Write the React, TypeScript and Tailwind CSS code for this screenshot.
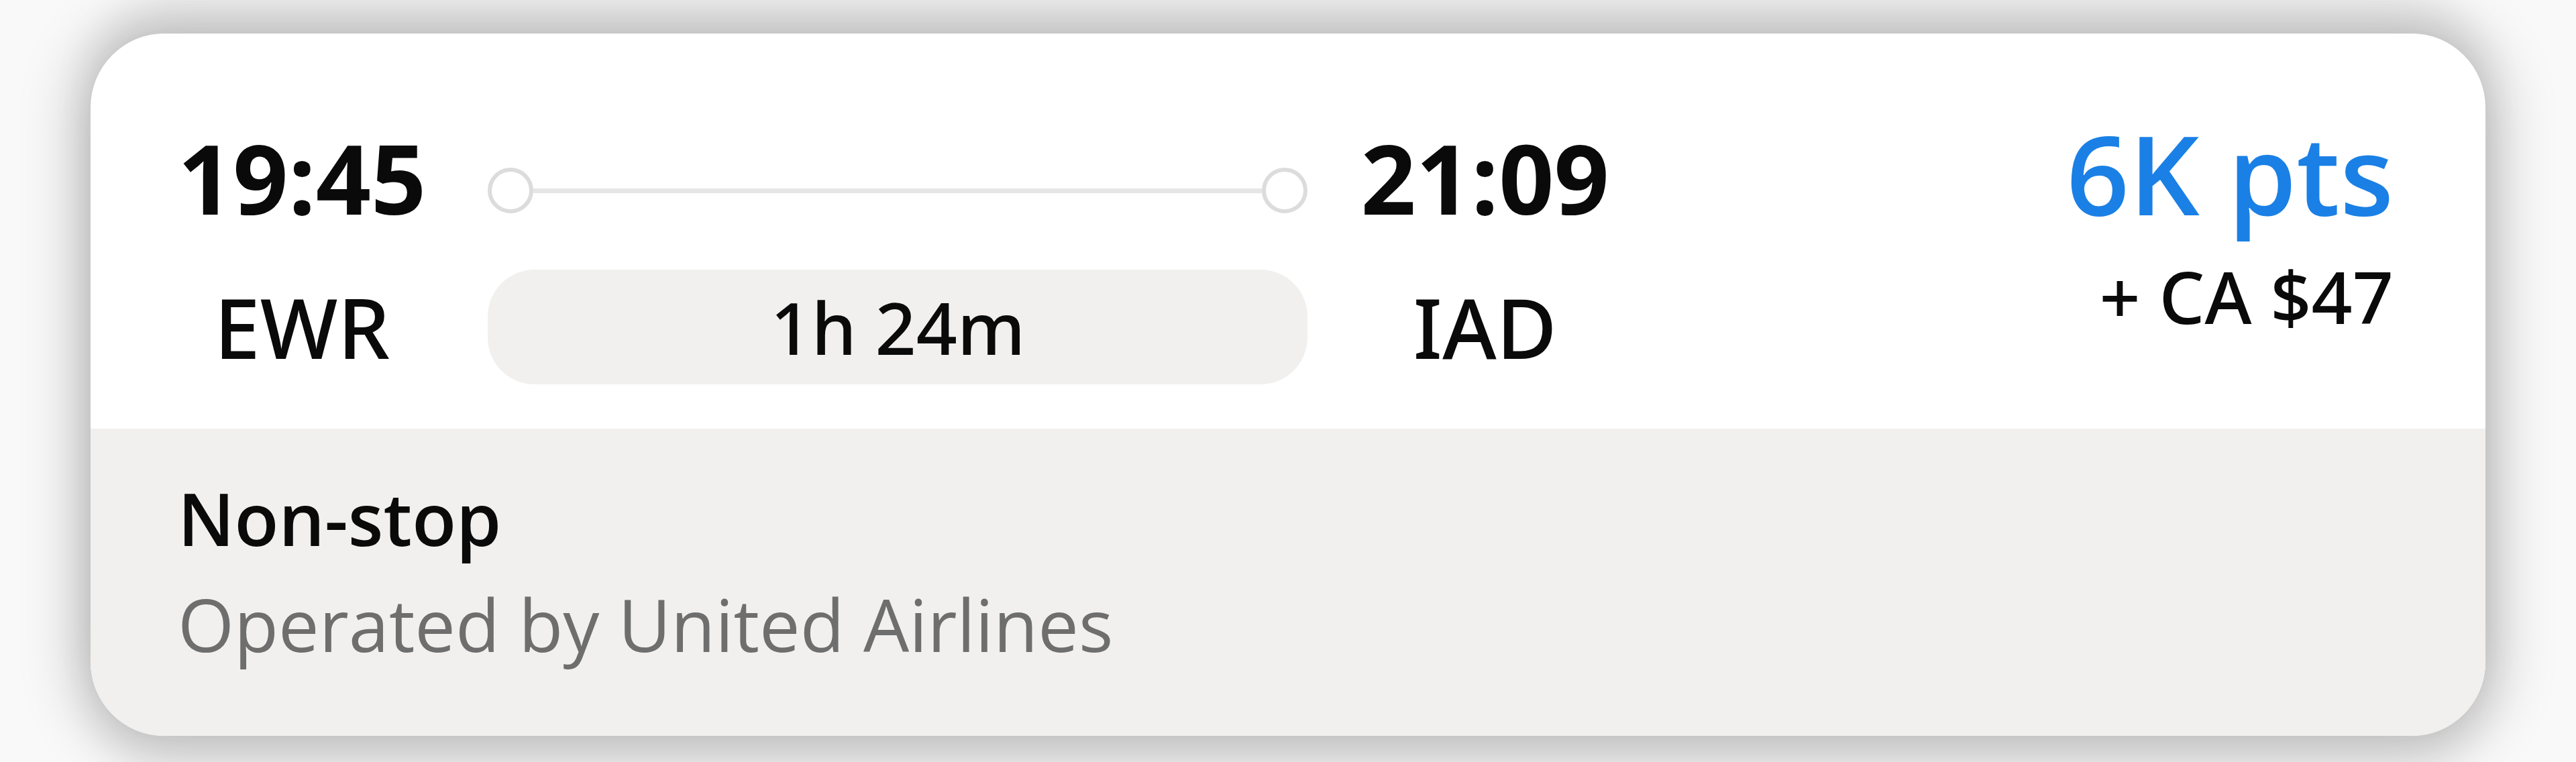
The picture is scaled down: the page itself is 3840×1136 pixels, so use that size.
import React from "react";

const FONT = { fontFamily: '"Open Sans", "Noto Sans", sans-serif' };
// Open Sans has no medium weight installed, Noto Sans does
const MEDIUM = { fontFamily: '"Noto Sans", "Open Sans", sans-serif' };

function TimeColumn({ time, code }: { time: string; code: string }) {
  return (
    <div className="flex flex-col items-center mt-[16px]">
      <span className="text-[144px] leading-[144px] font-bold text-[#0a0a0a]">{time}</span>
      <span className="mt-[90px] text-[123px] leading-[123px] font-medium text-[#0a0a0a]" style={MEDIUM}>
        {code}
      </span>
    </div>
  );
}

function Route({ duration }: { duration: string }) {
  return (
    <div className="w-[1222px] mt-[74px] flex flex-col">
      <div className="flex items-center h-[68px]">
        <div className="w-[68px] h-[68px] rounded-full border-[6px] border-[#dcdcdc] bg-white shrink-0" />
        <div className="flex-1 h-[7px] bg-[#e6e6e6]" />
        <div className="w-[68px] h-[68px] rounded-full border-[6px] border-[#dcdcdc] bg-white shrink-0" />
      </div>
      <div className="mt-[84px] h-[171px] rounded-[70px] bg-[#f1f0ee] flex items-center justify-center">
        <span className="text-[107px] leading-[107px] font-medium text-[#0a0a0a]" style={MEDIUM}>
          {duration}
        </span>
      </div>
    </div>
  );
}

export default function App() {
  return (
    <div className="w-[3840px] h-[1136px] overflow-hidden bg-[#f9f9f9] pt-[50px] pl-[135px]" style={FONT}>
      <div className="w-[3570px] h-[1047px] rounded-[110px] overflow-hidden bg-white flex flex-col shadow-[0_0_90px_20px_rgba(0,0,0,0.2),0_-40px_60px_rgba(0,0,0,0.08),0_40px_60px_rgba(0,0,0,0.08)]">
        {/* Times and route */}
        <div className="h-[589px] shrink-0 flex items-start pl-[130px] pr-[137px] pt-[126px]">
          <TimeColumn time="19:45" code="EWR" />
          <div className="ml-[92px]">
            <Route duration="1h 24m" />
          </div>
          <div className="ml-[79px]">
            <TimeColumn time="21:09" code="IAD" />
          </div>
          <div className="ml-auto flex flex-col items-end">
            <span className="text-[164px] leading-[164px] font-semibold text-[#1a80e5]">6K pts</span>
            <span className="mt-[48px] text-[107px] leading-[107px] font-medium text-[#0a0a0a]" style={MEDIUM}>
              + CA $47
            </span>
          </div>
        </div>

        {/* Details */}
        <div className="flex-1 bg-[#f1f0ee] pl-[130px] pt-[55px]">
          <p className="text-[108px] leading-[158px] font-semibold text-[#0a0a0a]">Non-stop</p>
          <p className="text-[108px] leading-[158px] text-[#6e6e6e]">Operated by United Airlines</p>
        </div>
      </div>
    </div>
  );
}
